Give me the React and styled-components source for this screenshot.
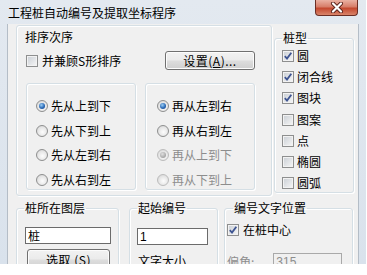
import React from 'react'
import styled, { createGlobalStyle } from 'styled-components'

const GlobalStyle = createGlobalStyle`
  html, body { margin: 0; padding: 0; background: #fff; }
  body {
    font-family: "Noto Sans CJK SC", "Noto Sans", sans-serif;
    font-size: 12px;
    color: #000;
  }
  * { box-sizing: border-box; }
`

const Window = styled.div`
  width: 366px;
  height: 264px;
  overflow: hidden;
  background: linear-gradient(#e3e9f0, #d9e2ec);
  display: flex;
  flex-direction: column;
`

const TitleBar = styled.div`
  height: 24px;
  flex: none;
  display: flex;
  justify-content: space-between;
  align-items: flex-start;
  padding: 0 8px;
`

const Title = styled.div`
  margin-top: 6px;
  line-height: 14px;
`

const CloseButton = styled.div`
  width: 43px;
  height: 16px;
  border: 1px solid #6b2e25;
  border-top: none;
  border-radius: 0 0 4px 4px;
  background: linear-gradient(#eab1a3, #d77e69 45%, #c4482f 55%, #d9856a);
  display: flex;
  align-items: center;
  justify-content: center;
`

const Client = styled.div`
  flex: 1;
  margin: 0 7px;
  background: #f0f0f0;
  padding: 1px 0 0 8px;
  border-left: 1px solid #b4bdc7;
  border-right: 1px solid #b4bdc7;
`

const Row = styled.div`
  display: flex;
  align-items: center;
  gap: ${p => p.gap}px;
  margin-top: ${p => p.top || 0}px;
`

const TopRow = styled.div`
  display: flex;
  align-items: flex-start;
  gap: ${p => p.gap}px;
  margin-top: ${p => p.top || 0}px;
`

const Panel = styled.div`
  width: ${p => p.w}px;
  height: ${p => p.h}px;
  border: 1px solid #d5dfe5;
  border-radius: 3px;
  box-shadow: inset 1px 1px 0 #fff, 1px 1px 0 #fff;
  padding: ${p => p.pad || '0'};
  flex: none;
`

const Group = styled.fieldset`
  margin: 0;
  width: ${p => p.w}px;
  height: ${p => p.h}px;
  border: 1px solid #d5dfe5;
  border-radius: 3px;
  box-shadow: inset 1px 1px 0 #fff, 1px 1px 0 #fff;
  padding: ${p => p.pad || '0'};
  flex: none;
  min-width: 0;
`

const Legend = styled.legend`
  padding: 0 1px;
  margin-left: ${p => p.left || 0}px;
  line-height: 14px;
`

const PanelLabel = styled.div`
  line-height: 14px;
  padding-left: ${p => p.left || 0}px;
  margin-top: ${p => p.top || 0}px;
`

const Line = styled.div`
  display: flex;
  align-items: center;
  height: ${p => p.h}px;
  gap: 3px;
  color: ${p => (p.disabled ? '#8d8d8d' : '#000')};
  line-height: 14px;
`

const SpreadLine = styled.div`
  display: flex;
  align-items: center;
  justify-content: space-between;
  margin-top: 7px;
  padding: 0 16px 0 9px;
`

const CheckItem = styled.div`
  display: flex;
  align-items: center;
  gap: 4px;
  line-height: 14px;
  margin-top: ${p => p.top || 0}px;
`

const Square = styled.span`
  width: 12px;
  height: 12px;
  flex: none;
  border: 1px solid #8e8f8f;
  background: linear-gradient(135deg, #c9ced4, #f7f7f7);
  box-shadow: inset 0 0 0 1px #f2f2f2;
  display: flex;
  align-items: center;
  justify-content: center;
`

const Dot = styled.span`
  width: 12px;
  height: 12px;
  flex: none;
  border-radius: 50%;
  border: 1px solid ${p => (p.disabled ? '#bcbcbc' : '#8e8f8f')};
  background: radial-gradient(circle at 55% 60%, #fdfdfd, #e6e6e6 55%, #cdcdcd);
  display: flex;
  align-items: center;
  justify-content: center;
  &::after {
    content: '';
    display: ${p => (p.checked ? 'block' : 'none')};
    width: 6px;
    height: 6px;
    border-radius: 50%;
    background: ${p =>
      p.disabled
        ? 'radial-gradient(circle at 40% 35%, #e0e0e0, #a4a4a4 70%)'
        : 'radial-gradient(circle at 40% 35%, #9ed0f5, #2a6ab7 55%, #163f7c)'};
  }
`

const Button = styled.div`
  width: ${p => p.w}px;
  height: ${p => p.h}px;
  margin-left: ${p => p.left || 0}px;
  margin-top: ${p => p.top || 0}px;
  border: 1px solid #707070;
  border-radius: 3px;
  background: linear-gradient(#f2f2f2, #ebebeb 48%, #dddddd 52%, #cfcfcf);
  box-shadow: inset 0 0 0 1px #fcfcfc;
  display: flex;
  align-items: center;
  justify-content: center;
  line-height: 14px;
  letter-spacing: 0.5px;
`

const Input = styled.div`
  width: ${p => p.w}px;
  height: 17px;
  flex: none;
  margin-left: ${p => p.left || 0}px;
  margin-top: ${p => p.top || 0}px;
  border: 1px solid ${p => (p.disabled ? '#a9a9a9' : '#6b6b6b')};
  background: ${p => (p.disabled ? '#f0f0f0' : '#fff')};
  color: ${p => (p.disabled ? '#8d8d8d' : '#000')};
  padding-left: 2px;
  display: flex;
  align-items: center;
  font-family: "Liberation Sans", "Noto Sans CJK SC", sans-serif;
  font-size: 12px;
`

const Check = ({ checked }) => (
  <Square>
    {checked && (
      <svg width="10" height="10" viewBox="0 0 10 10">
        <path d="M1.8 5.2 L4 7.6 L8.3 1.8" fill="none" stroke="#3e5491" strokeWidth="1.8" />
      </svg>
    )}
  </Square>
)

const firstOrder = [
  { t: '先从上到下', c: true },
  { t: '先从下到上' },
  { t: '先从左到右' },
  { t: '先从右到左' },
]

const secondOrder = [
  { t: '再从左到右', c: true },
  { t: '再从右到左' },
  { t: '再从上到下', c: true, d: true },
  { t: '再从下到上', d: true },
]

const types = [
  { t: '圆', c: true },
  { t: '闭合线', c: true },
  { t: '图块', c: true },
  { t: '图案' },
  { t: '点' },
  { t: '椭圆' },
  { t: '圆弧' },
]

const RadioList = ({ items, left }) => (
  <Panel w={110} h={107} pad={`10px 0 0 ${left}px`}>
    {items.map(i => (
      <Line key={i.t} h={24.5} disabled={i.d}>
        <Dot checked={i.c} disabled={i.d} />
        {i.t}
      </Line>
    ))}
  </Panel>
)

export default function App() {
  return (
    <Window>
      <GlobalStyle />
      <TitleBar>
        <Title>工程桩自动编号及提取坐标程序</Title>
        <CloseButton>
          <svg width="14" height="11" viewBox="0 0 14 11">
            <path d="M3 1.5 L11 9.5 M11 1.5 L3 9.5" stroke="#5b231b" strokeWidth="4" strokeLinecap="round" />
            <path d="M3 1.5 L11 9.5 M11 1.5 L3 9.5" stroke="#fff" strokeWidth="2.2" strokeLinecap="round" />
          </svg>
        </CloseButton>
      </TitleBar>
      <Client>
        <TopRow gap={2}>
          <Panel w={256} h={171} pad="4px 0 0 0">
            <PanelLabel left={8}>排序次序</PanelLabel>
            <SpreadLine>
              <CheckItem>
                <Check />
                并兼顾S形排序
              </CheckItem>
              <Button w={90} h={19}>
                设置(<u>A</u>)...
              </Button>
            </SpreadLine>
            <TopRow gap={9} top={13} style={{ paddingLeft: 9 }}>
              <RadioList items={firstOrder} left={9} />
              <RadioList items={secondOrder} left={11} />
            </TopRow>
          </Panel>
          <Group w={80} h={162} pad="0 0 0 7px" style={{ marginTop: 6 }}>
            <Legend>桩型</Legend>
            {types.map(i => (
              <Line key={i.t} h={21.3}>
                <Check checked={i.c} />
                {i.t}
              </Line>
            ))}
          </Group>
        </TopRow>
        <TopRow gap={6} top={5}>
          <Group w={103} h={80} pad="0" style={{ marginRight: 4 }}>
            <Legend left={7}>桩所在图层</Legend>
            <Input w={86} left={8} top={12}>桩</Input>
            <Button w={83} h={21} left={10} top={5}>
              选取 (<u>S</u>)
            </Button>
          </Group>
          <Group w={89} h={80} pad="0">
            <Legend left={7}>起始编号</Legend>
            <Input w={71} left={7} top={13}>1</Input>
            <PanelLabel left={8} top={9}>文字大小</PanelLabel>
          </Group>
          <Group w={129} h={80} pad="0 0 0 2px">
            <Legend left={6}>编号文字位置</Legend>
            <CheckItem top={8}>
              <Check checked />
              在桩中心
            </CheckItem>
            <Row gap={19} top={16}>
              <Line h={17} disabled>偏角:</Line>
              <Input w={69} disabled>315</Input>
            </Row>
          </Group>
        </TopRow>
      </Client>
    </Window>
  )
}
